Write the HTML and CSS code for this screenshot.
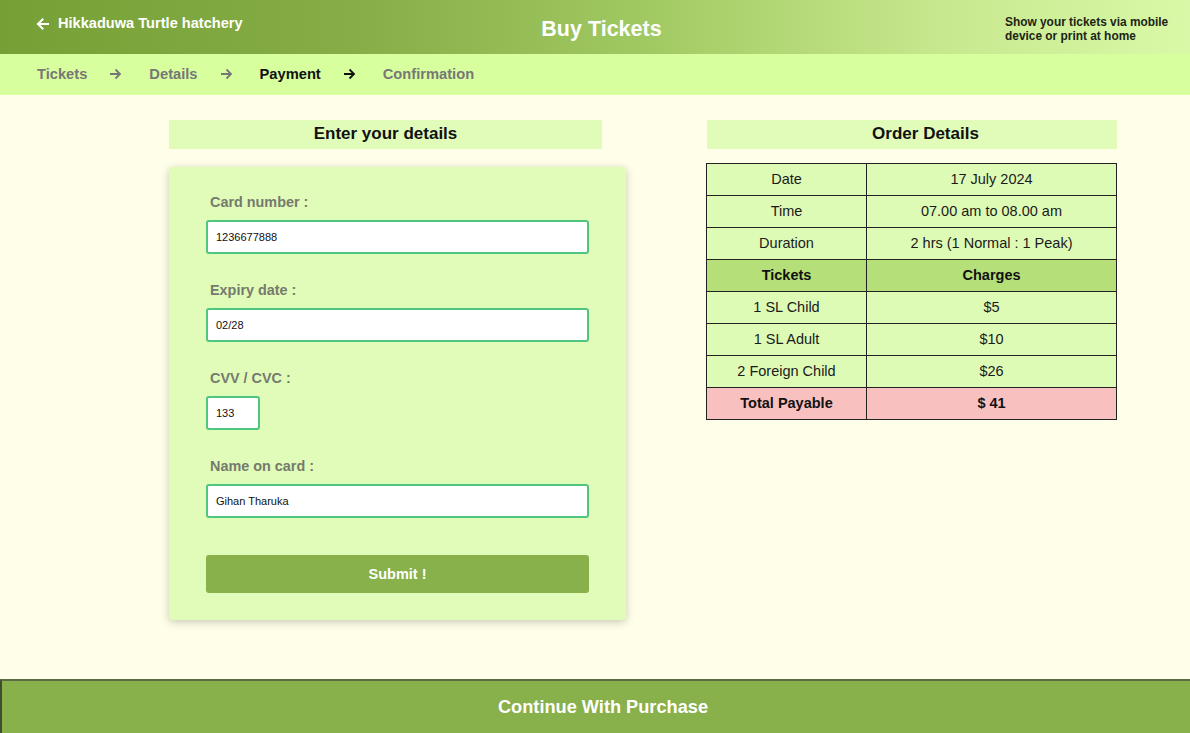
FILE: index.html
```html
<!DOCTYPE html>
<html>
<head>
<meta charset="utf-8">
<title>Buy Tickets</title>
<link rel="stylesheet" href="styles.css">
</head>
<body>
<div class="page">
  <header class="topbar">
    <div class="brand">
      <svg class="back" width="13" height="12" viewBox="0 0 13 12"><path d="M12 6H2M6.5 1.5L2 6l4.5 4.5" fill="none" stroke="#fff" stroke-width="2" stroke-linecap="square"/></svg>
      <span>Hikkaduwa Turtle hatchery</span>
    </div>
    <h1 class="title">Buy Tickets</h1>
    <p class="note">Show your tickets via mobile<br>device or print at home</p>
  </header>
  <nav class="steps">
    <span class="step">Tickets</span>
    <svg class="arrow" width="13" height="12" viewBox="0 0 13 12"><path d="M1 6h10M6.5 1.5L11 6l-4.5 4.5" fill="none" stroke="#777" stroke-width="1.8"/></svg>
    <span class="step">Details</span>
    <svg class="arrow" width="13" height="12" viewBox="0 0 13 12"><path d="M1 6h10M6.5 1.5L11 6l-4.5 4.5" fill="none" stroke="#777" stroke-width="1.8"/></svg>
    <span class="step active">Payment</span>
    <svg class="arrow" width="13" height="12" viewBox="0 0 13 12"><path d="M1 6h10M6.5 1.5L11 6l-4.5 4.5" fill="none" stroke="#111" stroke-width="1.8"/></svg>
    <span class="step">Confirmation</span>
  </nav>
  <main class="main">
    <section class="left">
      <h2 class="boxhead formhead">Enter your details</h2>
      <form class="card">
        <div class="field">
          <label>Card number :</label>
          <input class="inp" type="text" value="1236677888">
        </div>
        <div class="field">
          <label>Expiry date :</label>
          <input class="inp" type="text" value="02/28">
        </div>
        <div class="field">
          <label>CVV / CVC :</label>
          <input class="inp small" type="text" value="133">
        </div>
        <div class="field last">
          <label>Name on card :</label>
          <input class="inp" type="text" value="Gihan Tharuka">
        </div>
        <button class="submit" type="button">Submit !</button>
      </form>
    </section>
    <section class="right">
      <h2 class="boxhead orderhead">Order Details</h2>
      <table class="order">
        <tr><td class="c1">Date</td><td>17 July 2024</td></tr>
        <tr><td class="c1">Time</td><td>07.00 am to 08.00 am</td></tr>
        <tr><td class="c1">Duration</td><td>2 hrs (1 Normal : 1 Peak)</td></tr>
        <tr class="thead"><td class="c1">Tickets</td><td>Charges</td></tr>
        <tr><td class="c1">1 SL Child</td><td>$5</td></tr>
        <tr><td class="c1">1 SL Adult</td><td>$10</td></tr>
        <tr><td class="c1">2 Foreign Child</td><td>$26</td></tr>
        <tr class="total"><td class="c1">Total Payable</td><td>$ 41</td></tr>
      </table>
    </section>
  </main>
  <footer class="foot">
    <button class="continue" type="button">Continue With Purchase</button>
  </footer>
</div>
</body>
</html>
```
FILE: styles.css
```css
* { box-sizing: border-box; }
html, body { margin: 0; padding: 0; }
body {
  font-family: "Liberation Sans", Arial, sans-serif;
  background: #fffee8;
  color: #111;
}
.page {
  height: 733px;
  display: flex;
  flex-direction: column;
  overflow: hidden;
}
.topbar {
  height: 54px;
  display: grid;
  grid-template-columns: 1fr auto 1fr;
  align-items: start;
  padding-top: 15px;
  background: linear-gradient(to right, #76a036 0%, #86ad47 30%, #a2ca63 55%, #c6e78c 78%, #d9f9a8 100%);
}
.brand {
  display: flex;
  align-items: center;
  gap: 9px;
  padding-left: 36px;
  color: #fff;
  font-weight: bold;
  font-size: 14.6px;
  line-height: 17px;
}
.back { flex: none; margin-top: 1px; }
.title {
  margin: 2px 0 0 13px;
  color: #fff;
  font-size: 21.5px;
  line-height: 24px;
  font-weight: bold;
}
.note {
  margin: 0;
  justify-self: end;
  width: 185px;
  font-size: 11.9px;
  line-height: 14px;
  font-weight: bold;
  color: #1d2414;
}
.steps {
  height: 41px;
  background: #d8ff9e;
  display: flex;
  align-items: center;
  padding-left: 37px;
  padding-bottom: 2px;
  font-size: 14.7px;
  font-weight: bold;
  color: #777;
}
.step.active { color: #111; }
.arrow { margin: 1px 27px 0 22px; }
.main {
  flex: 1;
  display: flex;
  align-items: flex-start;
  padding: 25px 0 0 169px;
  gap: 80px;
}
.left { width: 457px; }
.right { width: 411px; }
.boxhead {
  margin: 0;
  height: 29px;
  line-height: 28px;
  background: #e0fcb8;
  text-align: center;
  font-size: 17px;
  font-weight: bold;
  color: #111;
}
.formhead { width: 433px; }
.orderhead { margin-left: 1px; padding-left: 27px; }
.card {
  margin-top: 18px;
  background: #e0fcb8;
  border-radius: 4px;
  box-shadow: 0 2px 8px rgba(0, 0, 0, 0.22);
  padding: 27px 37px 27px 37px;
}
.field { margin-bottom: 28px; }
.field.last { margin-bottom: 37px; }
.field label {
  display: block;
  margin: 0 0 10px 4px;
  font-size: 14.4px;
  line-height: 16px;
  font-weight: bold;
  color: #767a6e;
}
.inp {
  display: block;
  width: 383px;
  height: 34px;
  margin: 0;
  padding: 0 8px;
  border: 2px solid #4fc67e;
  border-radius: 3px;
  background: #fff;
  font-family: "Liberation Sans", Arial, sans-serif;
  font-size: 11px;
  color: #111;
}
.inp.small { width: 54px; }
.submit {
  display: block;
  width: 383px;
  height: 38px;
  border: none;
  border-radius: 3px;
  background: #88b04b;
  color: #fff;
  font-family: "Liberation Sans", Arial, sans-serif;
  font-size: 14.5px;
  font-weight: bold;
}
.order {
  margin-top: 14px;
  width: 411px;
  border-collapse: collapse;
  font-size: 14.5px;
  color: #1a1a1a;
}
.order td {
  height: 32px;
  padding: 0 0 2px 0;
  border: 1px solid #222;
  background: #defbb6;
  text-align: center;
}
.order td.c1 { width: 160px; }
.order .thead td { background: #b5df78; font-weight: bold; color: #111; }
.order .total td { background: #f9c0c0; font-weight: bold; color: #111; }
.foot { height: 54px; flex: none; }
.continue {
  display: block;
  width: 100%;
  height: 60px;
  margin: 0;
  background: #88b04b;
  border: none;
  border-top: 2px solid #5a6b46;
  border-left: 2px solid #3f4d30;
  color: #fff;
  font-family: "Liberation Sans", Arial, sans-serif;
  font-size: 18.2px;
  font-weight: bold;
  padding: 0 0 6px 14px;
}
```
